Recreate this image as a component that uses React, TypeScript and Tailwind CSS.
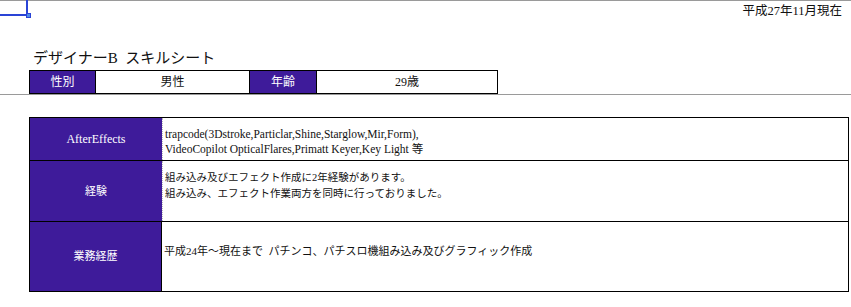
const purple = 'bg-[#3e1b9a]'

const font = { fontFamily: '"Liberation Serif", "Noto Sans CJK JP", serif' }

export default function App() {
  return (
    <div
      className="relative h-[307px] w-[851px] overflow-hidden bg-white text-[#111]"
      style={font}
    >
      {/* cell selection marker */}
      <div className="absolute left-0 top-0 h-[16px] w-[28px] border-b-2 border-r-2 border-[#2a44d6]" />
      <div className="absolute left-[26px] top-[13px] h-[5px] w-[5px] border border-[#2a44d6] bg-[#4f8be6]" />

      <div className="border-t border-[#9a9a9a]" />

      <div className="pr-[9px] pt-[2px] text-right text-[12.5px] leading-[16px]">平成27年11月現在</div>

      <h1 className="ml-[33px] mt-[29px] whitespace-pre text-[15px] leading-[20px]">
        デザイナーB  スキルシート
      </h1>

      <div className="ml-[29px] mt-[2px] flex h-[24px] w-[469px] border border-black text-[12px]">
        <div className={`flex w-[66px] items-center justify-center border-r border-black text-white ${purple}`}>
          性別
        </div>
        <div className="flex w-[154px] items-center justify-center border-r border-black">男性</div>
        <div className={`flex w-[67px] items-center justify-center border-r border-black text-white ${purple}`}>
          年齢
        </div>
        <div className="flex w-[180px] items-center justify-center">29歳</div>
      </div>

      <div className="h-px bg-[#9a9a9a]" />

      <div className="ml-[29px] mt-[22px] w-[820px] border border-black">
        <div className="flex h-[43px] border-b border-black">
          <div className={`flex w-[132px] items-center justify-center text-[12px] text-white ${purple}`}>
            AfterEffects
          </div>
          <div className="flex-1 border-l border-dotted border-[#bbb] pl-[2px] pt-[9px] text-[11.5px] leading-[15px]">
            <p>trapcode(3Dstroke,Particlar,Shine,Starglow,Mir,Form),</p>
            <p>VideoCopilot OpticalFlares,Primatt Keyer,Key Light 等</p>
          </div>
        </div>
        <div className="flex h-[61px] border-b border-black">
          <div className={`flex w-[132px] items-center justify-center text-[11px] text-white ${purple}`}>
            経験
          </div>
          <div className="flex-1 border-l border-dotted border-[#bbb] pl-[2px] pt-[9px] text-[10.5px] leading-[16px]">
            <p>組み込み及びエフェクト作成に2年経験があります。</p>
            <p>組み込み、エフェクト作業両方を同時に行っておりました。</p>
          </div>
        </div>
        <div className="flex h-[69px]">
          <div className={`flex w-[132px] items-center justify-center border-r border-black text-[11px] text-white ${purple}`}>
            業務経歴
          </div>
          <div className="flex-1 pl-[2px] pt-[21px] text-[11px] leading-[16px]">
            <p className="whitespace-pre">平成24年～現在まで  パチンコ、パチスロ機組み込み及びグラフィック作成</p>
          </div>
        </div>
      </div>
    </div>
  )
}
